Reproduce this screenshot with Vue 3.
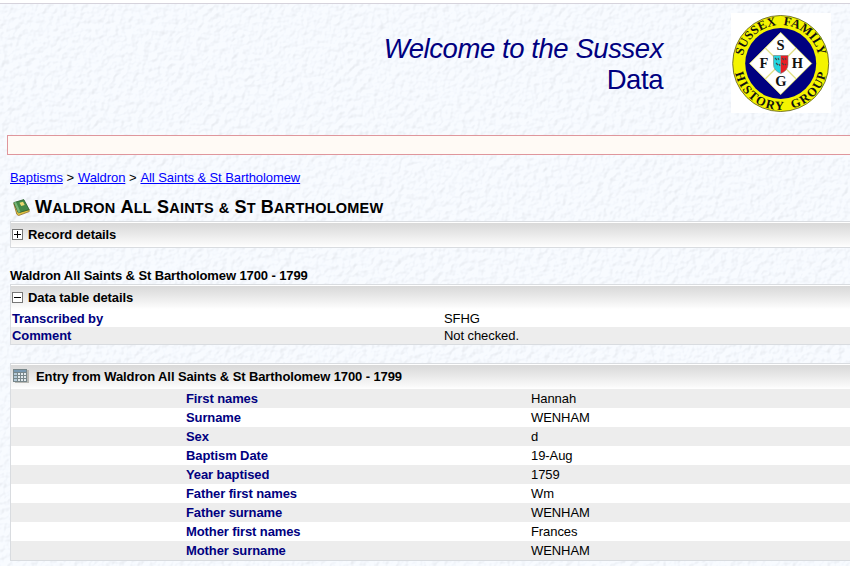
<script setup>
const crumbs = ['Baptisms', 'Waldron', 'All Saints & St Bartholomew']
const titleWords = ['Waldron', 'All', 'Saints', '&', 'St', 'Bartholomew']
const tableDetails = [
  ['Transcribed by', 'SFHG'],
  ['Comment', 'Not checked.'],
]
const entry = [
  ['First names', 'Hannah'],
  ['Surname', 'WENHAM'],
  ['Sex', 'd'],
  ['Baptism Date', '19-Aug'],
  ['Year baptised', '1759'],
  ['Father first names', 'Wm'],
  ['Father surname', 'WENHAM'],
  ['Mother first names', 'Frances'],
  ['Mother surname', 'WENHAM'],
]
</script>

<template>
  <div class="page">
    <svg class="paper" width="850" height="562" aria-hidden="true">
      <filter id="stucco" x="0" y="0" width="100%" height="100%" color-interpolation-filters="sRGB">
        <feTurbulence type="fractalNoise" baseFrequency="0.17" numOctaves="2" seed="8" result="noise" />
        <feDiffuseLighting in="noise" surfaceScale="0.9" diffuseConstant="1.33" lighting-color="#f5f8ff">
          <feDistantLight azimuth="225" elevation="48" />
        </feDiffuseLighting>
      </filter>
      <rect width="850" height="562" filter="url(#stucco)" />
      <rect width="850" height="562" fill="#f7faff" opacity="0.82" />
    </svg>

    <header class="banner">
      <div class="welcome"><em>Welcome to the Sussex</em><span>Data</span></div>
      <svg class="logo" width="100" height="100" viewBox="0 0 100 100">
        <rect width="100" height="100" fill="#fff" />
        <circle cx="49.7" cy="50.5" r="48" fill="#f4f400" stroke="#55551c" stroke-width="0.8" />
        <circle cx="49.7" cy="50.5" r="35.5" fill="#000080" />
        <path d="M49.7 19.5 80.7 50.5 49.7 81.5 18.7 50.5Z" fill="#fff" stroke="#e8e878" stroke-width="1" />
        <path d="M34.2 35 65.2 66M65.2 35 34.2 66" stroke="#e1e184" stroke-width="1.2" />
        <path d="M42.5 42.5h7.3v18q-7.3-3-7.3-9z" fill="#25d5df" />
        <path d="M49.7 42.5H57v9q0 6-7.3 9z" fill="#e91d24" />
        <path d="M42.5 42.5H57v9q0 6-7.3 9-7.2-3-7.2-9z" fill="none" stroke="#777" stroke-width="0.6" />
        <path d="M44 45l2 2M47 45l1 2M45 50l2 2M48 51l1 2M51 45l2 2M54 45l1 2M51 50l2 2M54 51l1 1" stroke="#464646" stroke-width="1.1" />
        <g class="initials">
          <text x="49.5" y="37.4">S</text><text x="33" y="55">F</text>
          <text x="66.3" y="55">H</text><text x="50" y="72.5">G</text>
        </g>
        <path id="upper" d="M11.2 50.5a38.5 38.5 0 0 1 77 0" fill="none" />
        <path id="lower" d="M3.2 50.5a46.5 46.5 0 0 0 93 0" fill="none" />
        <g class="ring">
          <text><textPath href="#upper" startOffset="50%" textLength="105">SUSSEX FAMILY</textPath></text>
          <text><textPath href="#lower" startOffset="50%" textLength="126">HISTORY GROUP</textPath></text>
        </g>
      </svg>
    </header>

    <div class="notice"></div>

    <nav class="crumbs">
      <template v-for="(c, i) in crumbs" :key="c"><span v-if="i"> &gt; </span><a href="#">{{ c }}</a></template>
    </nav>

    <h1 class="title">
      <svg width="17" height="17" viewBox="0 0 17 17">
        <path d="M.8 4.5 3.8 15.2 5.5 16.6 16.2 12.6v-2L5.5 13.5Z" fill="#e2c341" stroke="#8b6a27" stroke-width="0.8" />
        <path d="M.8 3.6 10.8.6 16.2 10.6 5.4 13.8Z" fill="#438947" stroke="#27602c" stroke-width="0.8" />
        <path d="M1 3.6 3 2.9 7.6 13 5.4 14Z" fill="#78b578" />
        <path d="M6.5 3.8 10 2.8l1.7 3.1-3.5 1.1Z" fill="#ead870" />
      </svg>
      <span class="words">
        <span v-for="w in titleWords" :key="w" :class="{ amp: w === '&' }">{{ w }}</span>
      </span>
    </h1>

    <section class="panel record">
      <h2><i class="toggle plus"></i>Record details</h2>
    </section>

    <h3 class="subtitle">Waldron All Saints &amp; St Bartholomew 1700 - 1799</h3>

    <section class="panel details">
      <h2><i class="toggle"></i>Data table details</h2>
      <dl>
        <div v-for="row in tableDetails" :key="row[0]"><dt>{{ row[0] }}</dt><dd>{{ row[1] }}</dd></div>
      </dl>
    </section>

    <section class="panel entry">
      <h2>
        <svg width="16" height="14" viewBox="0 0 16 14">
          <path d="M15 1v13H2" fill="none" stroke="#b9b9b4" stroke-width="2" />
          <rect width="14" height="13" fill="#77868a" />
          <path d="M1 1h12v2H1z" fill="#7798b1" />
          <path d="M1 4h3v2H1zm0 3h3v2H1zm0 3h3v2H1z" fill="#b4cad8" />
          <path d="M5 4h2v2H5zm3 0h2v2H8zm3 0h2v2h-2zM5 7h2v2H5zm3 0h2v2H8zm3 0h2v2h-2zm-6 3h2v2H5zm3 0h2v2H8zm3 0h2v2h-2z" fill="#e3eaed" />
        </svg>
        Entry from Waldron All Saints &amp; St Bartholomew 1700 - 1799
      </h2>
      <dl>
        <div v-for="row in entry" :key="row[0]"><dt>{{ row[0] }}</dt><dd>{{ row[1] }}</dd></div>
      </dl>
    </section>
  </div>
</template>

<style>
body { margin: 0; background: #f5f8ff; overflow: hidden; }
</style>

<style scoped>
.page {
  position: relative;
  box-sizing: border-box;
  height: 566px;
  overflow: hidden;
  border-top: 3px solid #fff;
  font: 13px/15px "Liberation Sans", Arial, sans-serif;
  color: #000;
}
.page > * { position: relative; box-sizing: border-box; }
.page > .paper { position: absolute; top: 1px; left: 0; }
.banner {
  display: flex;
  justify-content: flex-end;
  height: 132px;
  padding: 10px 19px 0 0;
  border-top: 1px solid #d6d3dc;
}
.welcome {
  display: flex;
  flex-direction: column;
  align-items: flex-end;
  margin-right: 68px;
  padding-top: 19px;
  font-size: 27.5px;
  line-height: 31px;
  letter-spacing: -0.43px;
  color: #000080;
}
.logo { display: block; margin-top: -1px; }
.initials text, .ring text {
  font-family: "Liberation Serif", serif;
  font-weight: bold;
  text-anchor: middle;
  fill: #111;
}
.initials text { font-size: 14.5px; }
.ring text { font-size: 12.5px; word-spacing: 3px; }
.notice {
  height: 20px;
  margin-left: 7px;
  border: 1px solid #df969c;
  border-right: 0;
  background: #fffaf5;
}
.crumbs { margin: 15px 0 0 10px; white-space: pre; }
.crumbs a { color: #00f; letter-spacing: -0.08px; }
.crumbs span { letter-spacing: 0.1px; }
.title {
  display: flex;
  align-items: center;
  gap: 5px;
  height: 20px;
  margin: 12px 0 0 13px;
  font-size: 14.5px;
  line-height: 20px;
}
.words { display: flex; align-items: baseline; gap: 5px; letter-spacing: 0.22px; }
.words span { display: block; text-transform: uppercase; }
.words span::first-letter { font-size: 18px; }
.words .amp::first-letter { font-size: 14.5px; }
.panel {
  margin-left: 10px;
  border: 1px solid #d9dce0;
  border-right: 0;
  background: #fff;
}
.panel h2 {
  display: flex;
  align-items: center;
  box-sizing: border-box;
  height: 24px;
  margin: 1px 0 0;
  padding: 0 0 2px 1px;
  font-size: 13px;
  letter-spacing: -0.1px;
  background: linear-gradient(#d9d9d9, #e1e1e1 25%, #fafafa 90%, #fff);
}
.record { height: 27px; margin-top: 4px; }
.details { height: 61px; margin-top: 1px; }
.entry { height: 198px; margin-top: 18px; }
.entry h2 { height: 24px; padding-left: 2px; }
.entry h2 svg { margin-right: 7px; }
.toggle {
  box-sizing: border-box;
  width: 11px;
  height: 11px;
  margin-right: 5px;
  border: 1px solid #777;
  background: linear-gradient(#000, #000) center / 7px 1px no-repeat #fff;
}
.plus {
  background: linear-gradient(#000, #000) center / 7px 1px no-repeat,
    linear-gradient(#000, #000) center / 1px 7px no-repeat #fff;
}
.subtitle { margin: 20px 0 0 10px; font-size: 13px; line-height: 15px; letter-spacing: -0.1px; }
dl { margin: 0; }
dl div { display: grid; height: 19px; align-items: center; }
dt { font-weight: bold; color: #000080; letter-spacing: -0.1px; }
dd { margin: 0; letter-spacing: -0.08px; }
.entry dl div { grid-template-columns: 345px 1fr; padding-left: 175px; }
.entry dl div:nth-child(odd) { background: #ededed; }
.details h2 { height: 23px; padding-bottom: 0; }
.details dl div { grid-template-columns: 432px 1fr; height: 18px; padding-left: 1px; }
.details dl div:nth-child(even) { height: 17px; background: #ededed; }
</style>
